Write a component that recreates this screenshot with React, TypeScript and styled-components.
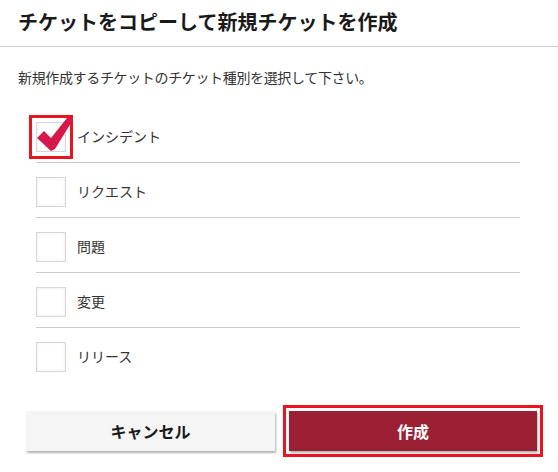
import React from 'react';
import styled, {createGlobalStyle} from "styled-components";

const GlobalStyle = createGlobalStyle`
    body {
        margin: 0;
        background: #fff;
        font-family: "Noto Sans CJK JP", "Noto Sans", sans-serif;
        color: #333;
    }
`

type TicketType = {
    id: number
    label: string
    checked: boolean
}

const ticketTypes: TicketType[] = [
    {id: 1, label: 'インシデント', checked: true},
    {id: 2, label: 'リクエスト', checked: false},
    {id: 3, label: '問題', checked: false},
    {id: 4, label: '変更', checked: false},
    {id: 5, label: 'リリース', checked: false},
]

const CheckMark = () => (
    <CheckSvg width="36" height="36" viewBox="0 0 36 36">
        <polygon
            points="0,19 7,12 14,19 30,-1 35,-1 34,4 18,30 14,32"
            fill="#d6174b"
        />
    </CheckSvg>
)

export default function App() {
    return (
        <Dialog>
            <GlobalStyle/>
            <Header>
                <Title>チケットをコピーして新規チケットを作成</Title>
            </Header>
            <Body>
                <Description>新規作成するチケットのチケット種別を選択して下さい。</Description>
                <TypeList>
                    {ticketTypes.map(t => {
                        return (
                            <TypeRow key={t.id}>
                                <CheckBox highlighted={t.checked}>
                                    {t.checked && <CheckMark/>}
                                </CheckBox>
                                <Label>{t.label}</Label>
                            </TypeRow>
                        )
                    })}
                </TypeList>
            </Body>
            <Footer>
                <CancelButton>キャンセル</CancelButton>
                <CreateButton>作成</CreateButton>
            </Footer>
        </Dialog>
    );
}

const Dialog = styled.div`
    width: 558px;
    height: 472px;
    background: #fff;
`
const Header = styled.div`
    height: 47px;
    display: flex;
    align-items: center;
    padding: 0 18px 4px;
    box-sizing: border-box;
    border-bottom: 1px solid #cccccc;
`
const Title = styled.h1`
    margin: 0;
    font-size: 20px;
    font-weight: 700;
    color: #1a1a1a;
    letter-spacing: 0;
`
const Body = styled.div`
    padding: 20px 18px 0;
`
const Description = styled.p`
    margin: 0;
    font-size: 14px;
    line-height: 20px;
    color: #333;
    letter-spacing: -0.35px;
`
const TypeList = styled.div`
    margin: 21px 20px 0 18px;
`
const TypeRow = styled.div`
    height: 55px;
    box-sizing: border-box;
    display: flex;
    align-items: flex-start;
    padding-top: 14px;
    border-bottom: 1px solid #cccccc;

    &:last-child {
        border-bottom: none;
    }
`
const CheckBox = styled.div<{highlighted?: boolean}>`
    position: relative;
    width: 30px;
    height: 30px;
    box-sizing: border-box;
    border: 1px solid #d8d8d8;
    box-shadow: inset 0 0 3px #e8e8e8;
    background: #fff;
    flex-shrink: 0;
    outline: ${p => p.highlighted ? '3px solid #e8141f' : 'none'};
    outline-offset: 4px;
`
const CheckSvg = styled.svg`
    position: absolute;
    left: 0;
    top: -4px;
    overflow: visible;
`
const Label = styled.span`
    margin-left: 11px;
    font-size: 14px;
    line-height: 28px;
    color: #333;
`
const Footer = styled.div`
    display: grid;
    grid-template-columns: 249px 248px;
    column-gap: 14px;
    padding: 28px 0 0 26px;
`
const BaseButton = styled.button`
    height: 40px;
    border: none;
    font-family: "Noto Sans CJK JP", sans-serif;
    font-size: 16px;
    font-weight: 700;
    box-shadow: 1px 2px 2px rgba(0, 0, 0, 0.3);
    cursor: pointer;
`
const CancelButton = styled(BaseButton)`
    background: #f5f5f5;
    color: #1a1a1a;
`
const CreateButton = styled(BaseButton)`
    background: #9b2033;
    color: #fff;
    outline: 3px solid #e8141f;
    outline-offset: 3px;
`
